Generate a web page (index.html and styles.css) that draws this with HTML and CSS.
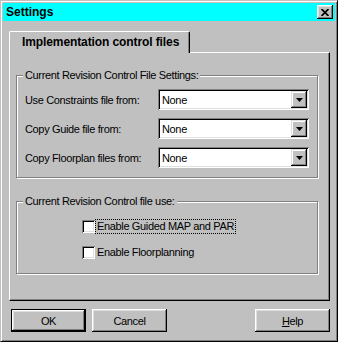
FILE: index.html
```html
<!DOCTYPE html>
<html lang="en">
<head>
  <meta charset="UTF-8" />
  <title>Settings</title>
  <link rel="stylesheet" href="styles.css">
</head>
<body>
  <div class="window">
    <div class="titlebar">
      <span class="title">Settings</span>
      <button class="close-btn">
        <svg width="8" height="7" viewBox="0 0 8 7"><path d="M0.5 0 L7.5 7 M7.5 0 L0.5 7" stroke="#000" stroke-width="1.7"/></svg>
      </button>
    </div>

    <div class="client">
      <div class="tabs">
        <div class="tab">Implementation control files</div>
      </div>

      <div class="panel">
        <fieldset class="group group-files">
          <legend>Current Revision Control File Settings:</legend>
          <div class="field-row">
            <label>Use Constraints file from:</label>
            <div class="combo"><span class="combo-value">None</span><span class="combo-btn"><svg width="7" height="4" viewBox="0 0 7 4"><polygon points="0,0 7,0 3.5,4" fill="#000"/></svg></span></div>
          </div>
          <div class="field-row">
            <label>Copy Guide file from:</label>
            <div class="combo"><span class="combo-value">None</span><span class="combo-btn"><svg width="7" height="4" viewBox="0 0 7 4"><polygon points="0,0 7,0 3.5,4" fill="#000"/></svg></span></div>
          </div>
          <div class="field-row">
            <label>Copy Floorplan files from:</label>
            <div class="combo"><span class="combo-value">None</span><span class="combo-btn"><svg width="7" height="4" viewBox="0 0 7 4"><polygon points="0,0 7,0 3.5,4" fill="#000"/></svg></span></div>
          </div>
        </fieldset>

        <fieldset class="group group-use">
          <legend>Current Revision Control file use:</legend>
          <div class="check-row">
            <span class="check-box"></span>
            <span class="check-label focused">Enable Guided MAP and PAR</span>
          </div>
          <div class="check-row">
            <span class="check-box"></span>
            <span class="check-label">Enable Floorplanning</span>
          </div>
        </fieldset>
      </div>

      <div class="buttons">
        <button class="btn btn-default">OK</button>
        <button class="btn">Cancel</button>
        <button class="btn btn-help"><u>H</u>elp</button>
      </div>
    </div>
  </div>
</body>
</html>
```

FILE: styles.css
```css
body {
  margin: 0;
  font-family: "Liberation Sans", Arial, sans-serif;
  font-size: 11px;
  letter-spacing: -0.35px;
  color: #000;
}

.window {
  width: 338px;
  height: 342px;
  box-sizing: border-box;
  background-color: #c0c0c0;
  border: 1px solid;
  border-color: #c0c0c0 #000 #000 #c0c0c0;
  box-shadow: inset 1px 1px #fff, inset -1px -1px #808080;
  padding: 2px;
  display: flex;
  flex-direction: column;
}

.titlebar {
  height: 18px;
  flex: none;
  background-color: #00ffff;
  display: flex;
  align-items: center;
  justify-content: space-between;
  padding: 0 2px 0 3px;
}

.title {
  font-weight: bold;
  font-size: 12px;
  letter-spacing: 0;
}

.close-btn {
  width: 16px;
  height: 14px;
  padding: 0;
  border: none;
  background-color: #c0c0c0;
  box-shadow: inset -1px -1px #000, inset 1px 1px #fff, inset -2px -2px #808080, inset 2px 2px #dfdfdf;
  display: flex;
  align-items: center;
  justify-content: center;
}

.client {
  flex: 1;
  padding: 10px 5px 7px 6px;
  display: flex;
  flex-direction: column;
}

.tabs {
  display: flex;
  flex: none;
}

.tab {
  position: relative;
  z-index: 1;
  width: 181px;
  height: 22px;
  margin-bottom: -1px;
  box-sizing: border-box;
  background-color: #c0c0c0;
  border-top: 1px solid #fff;
  border-left: 1px solid #fff;
  border-right: 1px solid #000;
  border-top-left-radius: 2px;
  border-top-right-radius: 2px;
  box-shadow: inset -1px 0 #808080;
  padding-left: 12px;
  font-weight: bold;
  font-size: 12px;
  letter-spacing: -0.1px;
  line-height: 21px;
}

.panel {
  flex: none;
  height: 249px;
  box-sizing: border-box;
  border-top: 1px solid #fff;
  border-left: 1px solid #fff;
  border-right: 1px solid #000;
  border-bottom: 1px solid #000;
  box-shadow: inset -1px -1px #808080;
  padding: 15px 0 0 6px;
}

/* group boxes */
.group {
  width: 302px;
  box-sizing: border-box;
  margin: 0;
  border: 1px solid #808080;
  box-shadow: inset 1px 1px #fff, 1px 1px #fff;
  padding: 7px 8px 9px 8px;
}

.group legend {
  background-color: #c0c0c0;
  padding: 0 2px;
  margin-left: -2px;
  line-height: 14px;
}

.group-use {
  margin-top: 16px;
  padding: 11px 8px 13px 8px;
}

.field-row {
  display: flex;
  justify-content: space-between;
  align-items: center;
  height: 21px;
  white-space: nowrap;
}

.field-row + .field-row {
  margin-top: 8px;
}

.combo {
  width: 151px;
  height: 21px;
  box-sizing: border-box;
  background-color: #fff;
  box-shadow: inset 1px 1px #808080, inset -1px -1px #fff, inset 2px 2px #000, inset -2px -2px #dfdfdf;
  padding: 2px;
  display: flex;
  align-items: center;
}

.combo-value {
  flex: 1;
  padding-left: 2px;
}

.combo-btn {
  width: 16px;
  height: 17px;
  box-sizing: border-box;
  background-color: #c0c0c0;
  box-shadow: inset -1px -1px #000, inset 1px 1px #dfdfdf, inset -2px -2px #808080, inset 2px 2px #fff;
  display: flex;
  align-items: center;
  justify-content: center;
}

/* checkboxes */
.check-row {
  display: flex;
  align-items: center;
  height: 15px;
  margin-left: 57px;
  white-space: nowrap;
}

.check-row + .check-row {
  margin-top: 11px;
}

.check-box {
  width: 13px;
  height: 13px;
  box-sizing: border-box;
  background-color: #fff;
  box-shadow: inset 1px 1px #808080, inset -1px -1px #fff, inset 2px 2px #000, inset -2px -2px #dfdfdf;
}

.check-label {
  border: 1px solid transparent;
  padding: 0 1px;
  line-height: 13px;
}

.check-label.focused {
  border: 1px dotted #000;
}

/* bottom buttons */
.buttons {
  display: flex;
  gap: 6px;
  margin-top: 8px;
  padding-left: 2px;
}

.btn {
  width: 75px;
  height: 23px;
  box-sizing: border-box;
  padding: 0;
  border: none;
  background-color: #c0c0c0;
  font-family: "Liberation Sans", Arial, sans-serif;
  font-size: 11px;
  letter-spacing: -0.35px;
  color: #000;
  box-shadow: inset -1px -1px #000, inset 1px 1px #fff, inset -2px -2px #808080, inset 2px 2px #dfdfdf;
}

.btn-default {
  border: 1px solid #000;
}

.btn-help {
  margin-left: auto;
}
```
